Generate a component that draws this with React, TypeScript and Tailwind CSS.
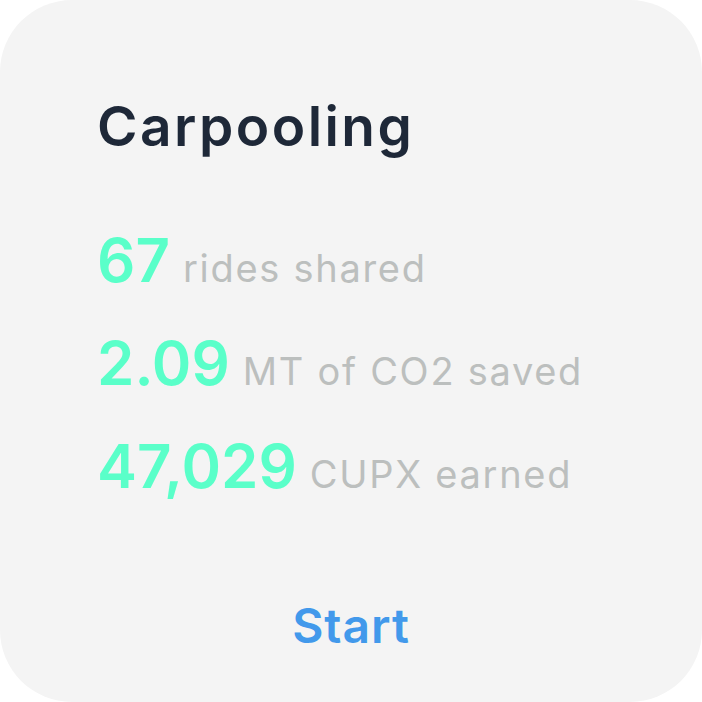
export default function App() {
  const stats = [
    { value: "67", label: "rides shared" },
    { value: "2.09", label: "MT of CO2 saved" },
    { value: "47,029", label: "CUPX earned" },
  ];

  return (
    <main className="h-[702px] w-[702px] bg-white font-['Inter',sans-serif]">
      <div className="flex h-full w-full flex-col rounded-[72px] bg-[#f4f4f4] pl-[97px] pt-[94px]">
        <h1 className="text-[55px] font-semibold leading-[64px] tracking-[0.045em] text-[#1e2838]">
          Carpooling
        </h1>

        <div className="mt-[51px] flex flex-col">
          {stats.map((s) => (
            <p key={s.value} className="text-[60px] leading-[103px] whitespace-nowrap">
              <span className="font-semibold text-[#5affc9]">{s.value}</span>
              <span className="ml-[13px] text-[38px] leading-none tracking-[0.045em] text-[#bcbfbe]">
                {s.label}
              </span>
            </p>
          ))}
        </div>

        <div className="mt-[76px] pr-[97px] text-center">
          <button className="text-[48px] font-semibold leading-[64px] tracking-[0.02em] text-[#4299eb]">
            Start
          </button>
        </div>
      </div>
    </main>
  );
}
